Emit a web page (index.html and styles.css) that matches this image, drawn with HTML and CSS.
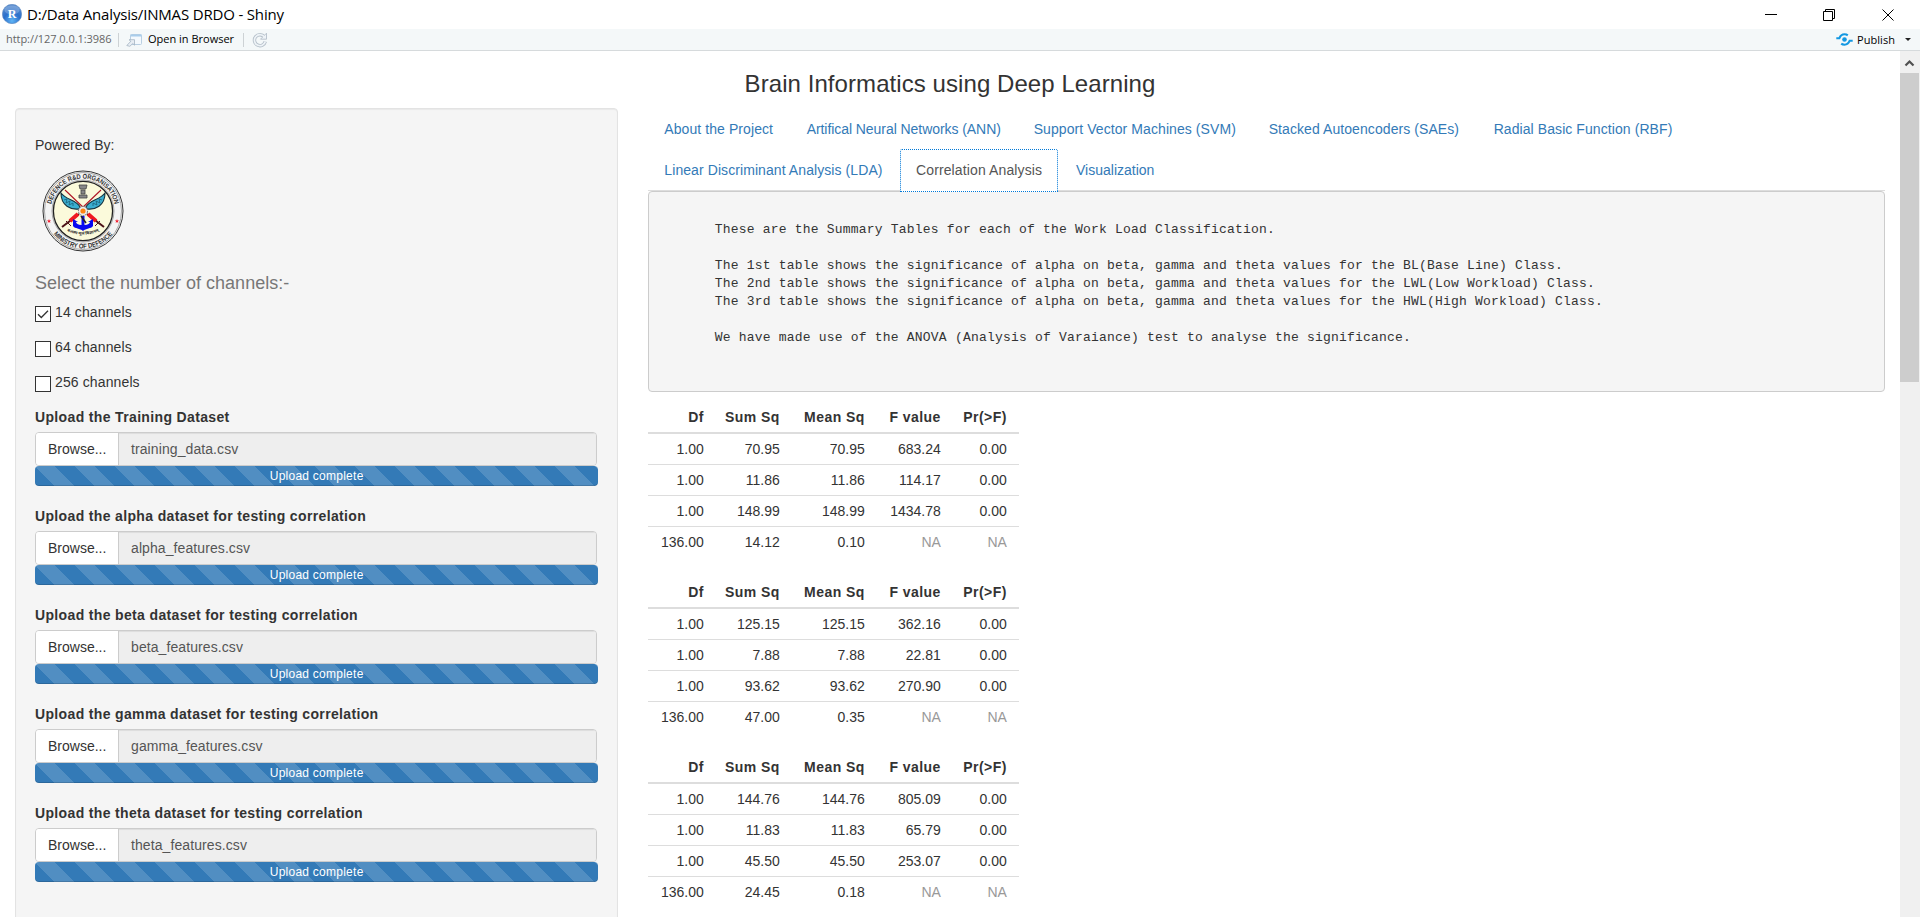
FILE: index.html
```html
<!DOCTYPE html>
<html lang="en">
<head>
<meta charset="utf-8">
<title>D:/Data Analysis/INMAS DRDO - Shiny</title>
<link rel="stylesheet" href="styles.css">
</head>
<body>
<header class="titlebar">
  <svg class="app-icon" width="20" height="20" viewBox="0 0 20 20">
    <defs><radialGradient id="ball" cx=".5" cy=".85" r=".85"><stop offset="0" stop-color="#5fb4f5"/><stop offset=".5" stop-color="#2a6fcb"/><stop offset="1" stop-color="#5c8fd0"/></radialGradient></defs>
    <circle cx="10" cy="10" r="9.7" fill="url(#ball)" stroke="#5b87bd" stroke-width=".6"/>
    <ellipse cx="10" cy="6" rx="7.6" ry="4.6" fill="#fff" opacity=".22"/>
    <text x="10.2" y="14" text-anchor="middle" class="app-letter">R</text>
  </svg>
  <span class="window-title">D:/Data Analysis/INMAS DRDO - Shiny</span>
  <svg class="window-buttons" width="140" height="28" viewBox="0 0 140 28" fill="none" stroke="#000" stroke-width="1">
    <path d="M5 13.5h12"/>
    <path d="M63.500 10.500h9v9h-9zM65.500 10.500v-2h9v9h-2"/>
    <path d="M122.500 8.500l11 11M133.500 8.500l-11 11"/>
  </svg>
</header>
<div class="toolbar">
  <span class="url">http://127.0.0.1:3986</span>
  <span class="sep"></span>
  <svg class="open-icon" width="17" height="14" viewBox="0 0 17 14">
    <rect x="4.500" y="1.500" width="11" height="10" rx="1" fill="#f4f9fd" stroke="#b9cfe2"/>
    <path d="M4.500 2.500h11" stroke="#a9cdeb" stroke-width="2"/>
    <path d="M.8 12.500l4-4.200-1.800-1.600h5.500v5.500l-1.700-1.700-3 2.800z" fill="#e8eef4" stroke="#a5b4c2" stroke-width=".8"/>
  </svg>
  <span class="open-label">Open in Browser</span>
  <span class="sep"></span>
  <svg class="reload-icon" width="16" height="16" viewBox="0 0 16 16" fill="none">
    <path d="M12.300 4.800A5.500 5.500 0 1 0 13.300 9.500" stroke="#b4bfc9" stroke-width="3.400"/>
    <path d="M14.500 1.200v6h-6z" fill="#eef3f7" stroke="#b4bfc9" stroke-width=".9"/>
    <path d="M12.300 4.800A5.500 5.500 0 1 0 13.300 9.500" stroke="#eef3f7" stroke-width="1.700"/>
  </svg>
  <span class="publish">
    <svg width="17" height="13" viewBox="0 0 17 13" fill="none" stroke="#1398e2" stroke-width="2.100">
      <circle cx="8.500" cy="6.500" r="2.300" fill="#1398e2" stroke="none"/>
      <path d="M.3 5.300H3.300C4.300 2.800 6 1.300 8.500 1.300c1.300 0 2.400.3 3.300 1"/>
      <path d="M16.700 7.700H13.700C12.700 10.200 11 11.700 8.500 11.700c-1.300 0-2.400-.3-3.300-1"/>
    </svg>
    <span class="publish-label">Publish</span>
    <span class="caret"></span>
  </span>
</div>
<div class="viewport">
<div class="page">
  <h3 class="page-title">Brain Informatics using Deep Learning</h3>
  <div class="row">
    <aside class="sidebar">
      <p class="powered">Powered By:</p>
      <svg class="emblem" width="82" height="82" viewBox="-41 -41 82 82">
        <defs>
          <path id="arcTop" d="M-32.400 0A32.400 32.400 0 0 1 32.400 0"/>
          <path id="arcBottom" d="M-37.400 0A37.400 37.400 0 0 0 37.400 0"/>
          <path id="arcMotto" d="M-17 19.500Q0 28 17 19.500"/>
        </defs>
        <circle r="40" fill="#f4f4f4" stroke="#333" stroke-width="1"/>
        <circle r="38.500" fill="none" stroke="#777" stroke-width=".6"/>
        <circle r="31" fill="none" stroke="#777" stroke-width=".6"/>
        <circle r="29.600" fill="#fbfadb" stroke="#222" stroke-width="1.300"/>
        <g class="ring-text">
          <text><textPath href="#arcTop" startOffset="50%" text-anchor="middle" textLength="88" lengthAdjust="spacingAndGlyphs">DEFENCE R&amp;D ORGANISATION</textPath></text>
          <text><textPath href="#arcBottom" startOffset="50%" text-anchor="middle" textLength="68" lengthAdjust="spacingAndGlyphs">MINISTRY OF DEFENCE</textPath></text>
        </g>
        <path d="M-34 8l.6 1.500h1.500l-1.200 1 .5 1.500-1.400-.9-1.400.9.500-1.500-1.200-1h1.500zM34 8l.6 1.500h1.500l-1.200 1 .5 1.500-1.400-.9-1.400.9.500-1.500-1.200-1h1.500z" fill="#f02030"/>
        <g stroke="#b01525" stroke-width="1.100"><path d="M-18-21L3-1M18-21L-3-1"/></g>
        <path d="M-22-18C-17-11-6-11-3-4L-4-2C-12-1-22-5-22-18zM22-18C17-11 6-11 3-4L4-2C12-1 22-5 22-18z" fill="#3aaed0" stroke="#173540" stroke-width="1.100"/>
        <path d="M-19-11l3-1-1 4 4-2-1 4 4-2 0 3M19-11l-3-1 1 4-4-2 1 4-4-2 0 3" fill="none" stroke="#1b5f78" stroke-width=".8"/>
        <path d="M-4-26h8l-1 4h-6zM-2-21h4v4h-4zM-4-16h8v3h-8z" fill="#888" stroke="#444" stroke-width=".8"/>
        <path d="M-4 3L-21 16M4 3L21 16" stroke="#4d1218" stroke-width="2"/>
        <path d="M-5 3L-13 10M5 3L13 10" stroke="#f01820" stroke-width="4"/>
        <path d="M-17 10l5 5M17 10l-5 5" stroke="#4d1218" stroke-width="1"/>
        <path d="M-1.500 5h3v9C5 14 7 12 7 11L5 11 10 8v7C8 18 3 17 0 20C-3 17-8 18-10 15V8L-5 11-7 11C-7 12-5 14-1.500 14z" fill="#0808f0"/>
        <path d="M-2 5l5 7" stroke="#222" stroke-width="1.600"/>
        <circle r="4.600" fill="#ececec" stroke="#777" stroke-width="1" stroke-dasharray="2 .8"/>
        <circle r="2.600" fill="#ff8410"/>
        <text class="motto"><textPath href="#arcMotto" startOffset="50%" text-anchor="middle" textLength="33" lengthAdjust="spacingAndGlyphs">बलस्य मूलं विज्ञानम्</textPath></text>
      </svg>
      <h4 class="channels-title">Select the number of channels:-</h4>
      <div class="check"><span class="box"><svg width="14" height="14" viewBox="0 0 14 14"><path d="M2 7.200l3.300 3.300L12 3.800" fill="none" stroke="#333" stroke-width="1.300"/></svg></span><span class="check-label">14 channels</span></div>
      <div class="check"><span class="box"></span><span class="check-label">64 channels</span></div>
      <div class="check"><span class="box"></span><span class="check-label">256 channels</span></div>

      <div class="upload"><div class="upload-label">Upload the Training Dataset</div><div class="file"><span class="browse">Browse...</span><span class="filename">training_data.csv</span></div><div class="progress">Upload complete</div></div>
      <div class="upload"><div class="upload-label">Upload the alpha dataset for testing correlation</div><div class="file"><span class="browse">Browse...</span><span class="filename">alpha_features.csv</span></div><div class="progress">Upload complete</div></div>
      <div class="upload"><div class="upload-label">Upload the beta dataset for testing correlation</div><div class="file"><span class="browse">Browse...</span><span class="filename">beta_features.csv</span></div><div class="progress">Upload complete</div></div>
      <div class="upload"><div class="upload-label">Upload the gamma dataset for testing correlation</div><div class="file"><span class="browse">Browse...</span><span class="filename">gamma_features.csv</span></div><div class="progress">Upload complete</div></div>
      <div class="upload"><div class="upload-label">Upload the theta dataset for testing correlation</div><div class="file"><span class="browse">Browse...</span><span class="filename">theta_features.csv</span></div><div class="progress">Upload complete</div></div>
    </aside>
    <main class="main">
      <nav class="tabs">
        <div class="tab-row">
          <a class="tab tab-about">About the Project</a><a class="tab tab-ann">Artifical Neural Networks (ANN)</a><a class="tab tab-svm">Support Vector Machines (SVM)</a><a class="tab tab-sae">Stacked Autoencoders (SAEs)</a><a class="tab">Radial Basic Function (RBF)</a>
        </div>
        <div class="tab-row">
          <a class="tab tab-lda">Linear Discriminant Analysis (LDA)</a><a class="tab active">Correlation Analysis</a><a class="tab tab-vis">Visualization</a>
        </div>
      </nav>
      <pre class="summary">
 
       These are the Summary Tables for each of the Work Load Classification.
 
       The 1st table shows the significance of alpha on beta, gamma and theta values for the BL(Base Line) Class.
       The 2nd table shows the significance of alpha on beta, gamma and theta values for the LWL(Low Workload) Class.
       The 3rd table shows the significance of alpha on beta, gamma and theta values for the HWL(High Workload) Class.
 
       We have made use of the ANOVA (Analysis of Varaiance) test to analyse the significance.
 
 
</pre>
      <table class="anova">
        <thead><tr><th>Df</th><th>Sum Sq</th><th>Mean Sq</th><th>F value</th><th>Pr(&gt;F)</th></tr></thead>
        <tbody>
          <tr><td>1.00</td><td>70.95</td><td>70.95</td><td>683.24</td><td>0.00</td></tr>
          <tr><td>1.00</td><td>11.86</td><td>11.86</td><td>114.17</td><td>0.00</td></tr>
          <tr><td>1.00</td><td>148.99</td><td>148.99</td><td>1434.78</td><td>0.00</td></tr>
          <tr><td>136.00</td><td>14.12</td><td>0.10</td><td class="na">NA</td><td class="na">NA</td></tr>
        </tbody>
      </table>
      <table class="anova">
        <thead><tr><th>Df</th><th>Sum Sq</th><th>Mean Sq</th><th>F value</th><th>Pr(&gt;F)</th></tr></thead>
        <tbody>
          <tr><td>1.00</td><td>125.15</td><td>125.15</td><td>362.16</td><td>0.00</td></tr>
          <tr><td>1.00</td><td>7.88</td><td>7.88</td><td>22.81</td><td>0.00</td></tr>
          <tr><td>1.00</td><td>93.62</td><td>93.62</td><td>270.90</td><td>0.00</td></tr>
          <tr><td>136.00</td><td>47.00</td><td>0.35</td><td class="na">NA</td><td class="na">NA</td></tr>
        </tbody>
      </table>
      <table class="anova">
        <thead><tr><th>Df</th><th>Sum Sq</th><th>Mean Sq</th><th>F value</th><th>Pr(&gt;F)</th></tr></thead>
        <tbody>
          <tr><td>1.00</td><td>144.76</td><td>144.76</td><td>805.09</td><td>0.00</td></tr>
          <tr><td>1.00</td><td>11.83</td><td>11.83</td><td>65.79</td><td>0.00</td></tr>
          <tr><td>1.00</td><td>45.50</td><td>45.50</td><td>253.07</td><td>0.00</td></tr>
          <tr><td>136.00</td><td>24.45</td><td>0.18</td><td class="na">NA</td><td class="na">NA</td></tr>
        </tbody>
      </table>
    </main>
  </div>
</div>
<div class="scrollbar">
  <svg width="20" height="21" viewBox="0 0 20 21"><path d="M5.500 13.500l4-4 4 4" fill="none" stroke="#505050" stroke-width="2.200"/></svg>
  <div class="thumb"></div>
</div>
</div>
</body>
</html>
```
FILE: styles.css
```css
* { box-sizing: border-box; }
html, body { margin: 0; height: 100%; overflow: hidden; }
body {
  display: flex;
  flex-direction: column;
  background: #fff;
  color: #333;
  font: 14px/20px "Liberation Sans", Arial, sans-serif;
}

/* window chrome */
.titlebar { display: flex; align-items: center; height: 29px; padding-left: 2px; flex: none; }
.app-icon { margin-top: -1px; }
.app-letter { font: bold 12px "Liberation Serif", serif; fill: #fff; }
.window-title { margin: -1px 0 0 5px; font: 15px/28px "Open Sans", sans-serif; letter-spacing: -.17px; color: #000; white-space: nowrap; }
.window-buttons { margin-left: auto; margin-right: 20px; }
.toolbar {
  display: flex;
  align-items: center;
  flex: none;
  height: 22px;
  padding-left: 6px;
  background: #f4f8f9;
  border-bottom: 1px solid #d6dadc;
  font: 11px/20px "Open Sans", sans-serif;
  color: #000;
  white-space: nowrap;
}
.url { width: 112px; margin-top: -1px; color: #666; letter-spacing: -.06px; }
.sep { width: 1px; height: 14px; background: #cdd2d5; }
.open-icon { margin-left: 7px; }
.open-label { margin: -1px 0 0 5px; width: 95px; }
.reload-icon { margin-left: 8px; }
.publish { display: flex; align-items: center; margin-left: auto; padding-right: 9px; }
.publish-label { margin-left: 4px; width: 48px; letter-spacing: .06px; }
.caret { border: 3px solid transparent; border-top-color: #222; border-bottom: 0; }

/* page */
.viewport { display: flex; flex: 1; min-height: 0; }
.page { width: 1900px; height: 100%; overflow: hidden; }
.page-title { margin: 20px 0 11px; text-align: center; font-size: 24px; font-weight: normal; line-height: 26px; letter-spacing: .07px; }
.row { display: flex; padding: 0 15px; gap: 30px; }
.sidebar {
  width: 603.33px;
  height: 900px;
  padding: 26px 19px 0;
  background: #f5f5f5;
  border: 1px solid #e3e3e3;
  border-radius: 4px;
  box-shadow: inset 0 1px 1px rgba(0, 0, 0, .05);
}
.powered { margin: 0; }
.emblem { display: block; margin: 15px 0 0 7px; }
.channels-title { margin: 21px 0 0; font-size: 18px; font-weight: normal; line-height: 20px; color: #777; }
.check { display: flex; height: 20px; margin-bottom: 15px; }
.channels-title + .check { margin-top: 9px; }
.box { width: 16px; height: 16px; margin-top: 4px; border: 1px solid #333; background: #fff; }
.box svg { display: block; }
.check-label { margin-left: 4px; letter-spacing: .12px; }
.upload { margin-bottom: 20px; }
.upload-label { margin-bottom: 5px; font-weight: bold; letter-spacing: .35px; }
.file { display: flex; width: 562px; height: 34px; border: 1px solid #ccc; border-radius: 4px; overflow: hidden; line-height: 32px; }
.browse { width: 83px; padding-left: 12px; background: #fff; border-right: 1px solid #ccc; }
.filename { flex: 1; padding-left: 12px; background: #eee; color: #555; letter-spacing: .09px; box-shadow: inset 0 1px 1px rgba(0, 0, 0, .075); }
.progress {
  height: 20px;
  border-radius: 4px;
  background: #337ab7 linear-gradient(45deg, rgba(255,255,255,.15) 25%, transparent 25%, transparent 50%, rgba(255,255,255,.15) 50%, rgba(255,255,255,.15) 75%, transparent 75%) 0 0 / 40px 40px;
  box-shadow: inset 0 -1px 0 rgba(0, 0, 0, .15);
  color: #fff;
  font-size: 12px;
  letter-spacing: .25px;
  text-align: center;
}

.main { flex: 1; }
.tabs { border-bottom: 1px solid #ddd; }
.tab-row { display: flex; gap: 2px; height: 41px; }
.tab { height: 42px; padding: 10px 15px; border: 1px solid transparent; color: #337ab7; white-space: nowrap; letter-spacing: .08px; }
.tab-about { width: 140.3px; }
.tab-ann { width: 225px; letter-spacing: -.06px; }
.tab-svm { width: 233px; }
.tab-sae { width: 223px; }
.tab-lda { width: 249.7px; }
.tab-vis { letter-spacing: 0; }
.tab.active {
  position: relative;
  width: 158px;
  height: 43px;
  border: 1px dotted #0078d7;
  border-radius: 2px 2px 0 0;
  background: #fff;
  color: #555;
  letter-spacing: .12px;
}
.summary {
  margin: 0 0 10px;
  height: 201px;
  padding: 10.5px 9.5px 8.5px;
  background: #f5f5f5;
  border: 1px solid #ccc;
  border-radius: 4px;
  font: 13px/18px "Liberation Mono", monospace;
  letter-spacing: .2px;
}
.anova { width: 371px; margin-bottom: 20px; border-spacing: 0; table-layout: fixed; }
.anova th, .anova td { padding: 5px 12.5px 5px 0; text-align: right; }
.anova th { border-bottom: 2px solid #ddd; white-space: nowrap; letter-spacing: .45px; }
.anova th:nth-child(1) { width: 68px; }
.anova th:nth-child(2) { width: 76px; }
.anova th:nth-child(3) { width: 85px; }
.anova th:nth-child(4) { width: 76px; }
.anova tr + tr td { border-top: 1px solid #ddd; }
.anova .na { color: #999; }

.scrollbar { width: 20px; padding-top: 1px; background: #f0f0f0; }
.scrollbar svg { display: block; }
.thumb { width: 19px; height: 309px; background: #cdcdcd; }

.ring-text { font: bold 6.8px "Liberation Sans", sans-serif; fill: #333; }
.motto { font: bold 4px "Noto Sans", sans-serif; fill: #333; }
```
